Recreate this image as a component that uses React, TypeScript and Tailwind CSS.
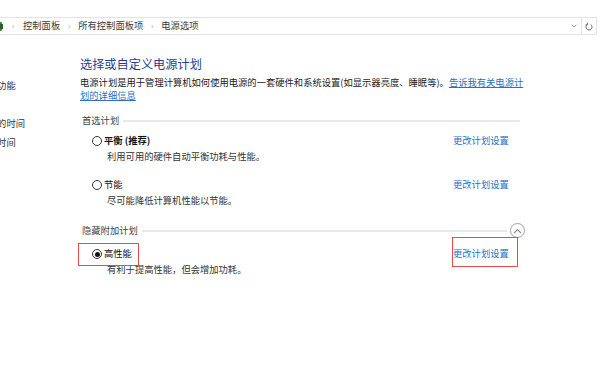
import { ChevronDown } from "lucide-react"

const font = "font-['Noto_Sans_CJK_SC','Noto_Sans',sans-serif]"

const sidebar = ["选择电源按钮的功能", "创建电源计划", "选择关闭显示器的时间", "更改计算机睡眠时间"]

function Sep({ first }: { first?: boolean }) {
  return (
    <span className={`${first ? "w-[20px]" : "w-[18px]"} text-center text-[8px] text-[#9a9a9a]`}>›</span>
  )
}

function Radio({ checked }: { checked?: boolean }) {
  return (
    <span className="flex size-[10px] items-center justify-center rounded-full border border-[#333]">
      {checked && <span className="size-[5px] rounded-full bg-[#111]" />}
    </span>
  )
}

function SectionHeader({ label, button }: { label: string; button?: boolean }) {
  return (
    <div className={`flex items-center ${button ? "h-[15px] mr-[2px]" : "h-[13px] mr-[7px]"}`}>
      <span className="pl-[2px] text-[#444]">{label}</span>
      <div className="ml-[4px] h-[2px] flex-1 bg-[#e8e8e8]" />
      {button && (
        <span className="ml-[3px] flex size-[15px] items-center justify-center rounded-full border border-[#a0a0a0]">
          <svg width="9" height="6" viewBox="0 0 9 6" fill="none" stroke="#8a8a8a" strokeWidth="1.1">
            <path d="M1 5 L4.5 1.5 L8 5" />
          </svg>
        </span>
      )}
    </div>
  )
}

function Plan({
  name,
  desc,
  bold,
  checked,
  highlight,
  rowTop,
  descTop,
}: {
  name: string
  desc: string
  bold?: boolean
  checked?: boolean
  highlight?: boolean
  rowTop: string
  descTop: string
}) {
  return (
    <>
      <div className={`relative flex h-[14px] items-center ${rowTop}`}>
        <div className="flex w-[373px] items-center pl-[12px]">
          <Radio checked={checked} />
          <span className={`ml-[2px] ${bold ? "font-bold" : ""} text-[#111]`}>{name}</span>
        </div>
        <a className="text-[#2b6fc7]">更改计划设置</a>
        {highlight && (
          <>
            <div className="absolute left-[-2px] top-[-4px] h-[23px] w-[61px] border border-[#e84a4a]" />
            <div className="absolute left-[372px] top-[-10px] h-[30px] w-[66px] border border-[#e84a4a]" />
          </>
        )}
      </div>
      <p className={`${descTop} pl-[27px] leading-[13px] text-[#333]`}>{desc}</p>
    </>
  )
}

export default function App() {
  return (
    <div className={`relative h-[377px] w-[602px] overflow-hidden bg-white text-[9.3px] ${font}`}>
      {/* address bar */}
      <div className="mt-[17px] flex h-[18px] w-[597px] items-center border-y border-r border-[#e3e3e3] text-[#3a3a3a]">
        <svg className="ml-[-8px]" width="11" height="11" viewBox="0 0 11 11">
          <rect x="0" y="1" width="10" height="9" rx="1" fill="#3d8a3a" />
          <rect x="8" y="3" width="3" height="5" fill="#2b5f2b" />
        </svg>
        <Sep first />
        <span>控制面板</span>
        <Sep />
        <span>所有控制面板项</span>
        <Sep />
        <span>电源选项</span>
        <div className="flex-1" />
        <ChevronDown className="mr-[3px] size-[8px] text-[#666]" strokeWidth={2} />
        <div className="h-full w-px bg-[#e3e3e3]" />
        <svg className="mx-[3px]" width="8" height="9" viewBox="0 0 8 9" fill="none" stroke="#666" strokeWidth="1">
          <path d="M5.6 2.4 A3 3 0 1 1 2.4 2.4" />
          <path d="M2.2 0.6 L2.6 2.6 L0.6 3" />
        </svg>
      </div>

      <div className="flex">
        {/* sidebar, scrolled off to the left */}
        <div className="w-[80px] overflow-hidden pt-[44px]">
          <div className="ml-[-68px] flex flex-col gap-[6px] whitespace-nowrap leading-[13px] text-[#333]">
            {sidebar.map((s) => (
              <span key={s}>{s}</span>
            ))}
          </div>
        </div>

        {/* main */}
        <div className="w-[447px]">
          <h1 className="mt-[22px] text-[12.2px] leading-[14px] text-[#1f3f8f]">选择或自定义电源计划</h1>
          <p className="mt-[5px] leading-[13px] text-[#222]">
            电源计划是用于管理计算机如何使用电源的一套硬件和系统设置(如显示器亮度、睡眠等)。
            <a className="text-[#2b6fc7] underline underline-offset-[1px]">
              告诉我有关电源计
              <br />
              划的详细信息
            </a>
          </p>

          <div className="mt-[12px]">
            <SectionHeader label="首选计划" />
          </div>
          <Plan name="平衡 (推荐)" bold desc="利用可用的硬件自动平衡功耗与性能。" rowTop="mt-[7px]" descTop="mt-[2px]" />
          <Plan name="节能" desc="尽可能降低计算机性能以节能。" rowTop="mt-[15px]" descTop="mt-[2px]" />

          <div className="mt-[16px]">
            <SectionHeader label="隐藏附加计划" button />
          </div>
          <Plan
            name="高性能"
            checked
            highlight
            desc="有利于提高性能，但会增加功耗。"
            rowTop="mt-[9px]"
            descTop="mt-[2px]"
          />
        </div>
      </div>
    </div>
  )
}
